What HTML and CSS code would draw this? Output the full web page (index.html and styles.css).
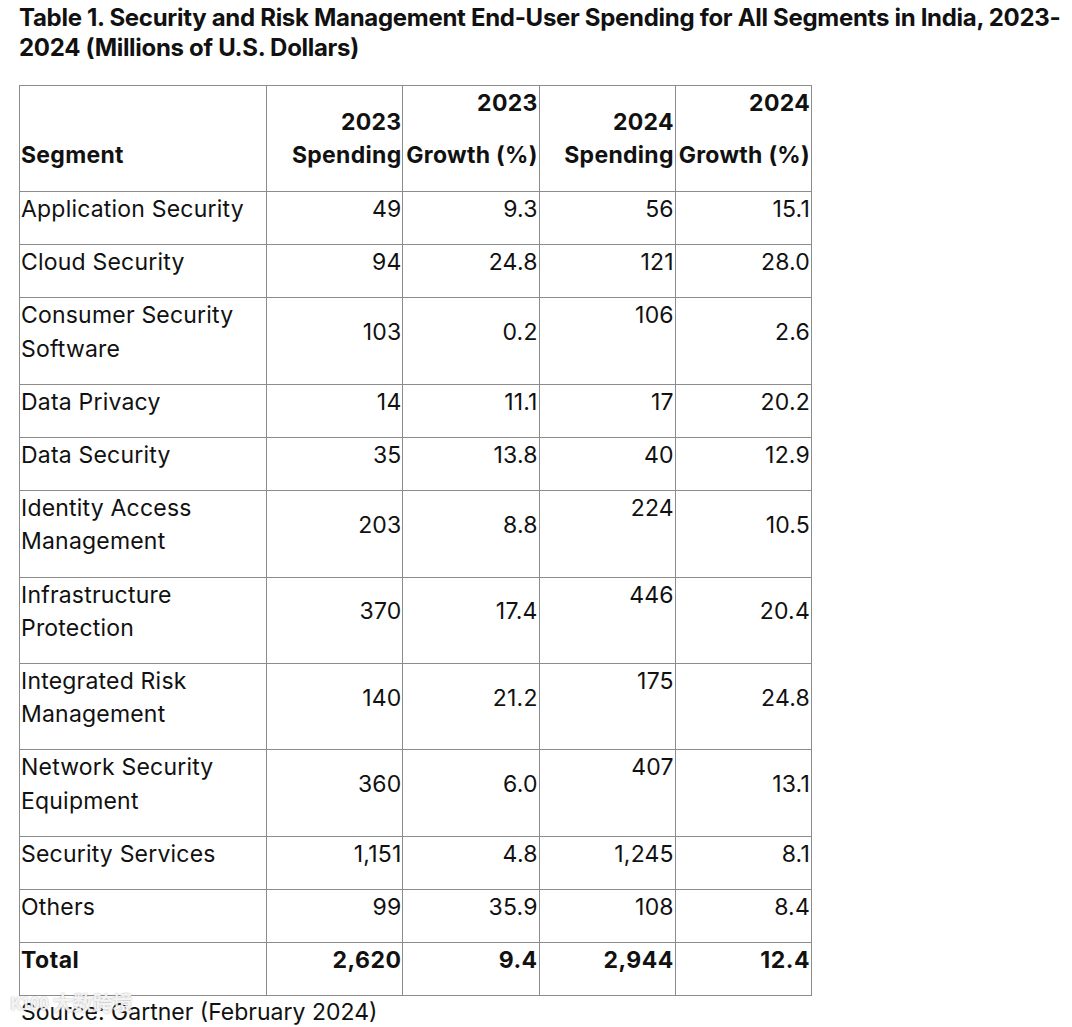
FILE: index.html
```html
<!DOCTYPE html>
<html lang="en">
<head>
<meta charset="utf-8">
<title>Table 1</title>
<link rel="stylesheet" href="styles.css">
</head>
<body>
<div class="page">
  <h3 class="title">Table 1. Security and Risk Management End-User Spending for All Segments in India, 2023-2024 (Millions of U.S. Dollars)</h3>
  <table class="data">
    <colgroup>
      <col class="c-seg"><col class="c-num"><col class="c-num"><col class="c-num"><col class="c-num">
    </colgroup>
    <thead>
      <tr>
        <th class="left"><p>Segment</p></th>
        <th><p>2023<br>Spending</p></th>
        <th><p>2023</p><p>Growth (%)</p></th>
        <th><p>2024<br>Spending</p></th>
        <th><p>2024</p><p>Growth (%)</p></th>
      </tr>
    </thead>
    <tbody>
      <tr><td class="left">Application Security</td><td>49</td><td>9.3</td><td class="top">56</td><td>15.1</td></tr>
      <tr><td class="left">Cloud Security</td><td>94</td><td>24.8</td><td class="top">121</td><td>28.0</td></tr>
      <tr><td class="left">Consumer Security<br>Software</td><td>103</td><td>0.2</td><td class="top">106</td><td>2.6</td></tr>
      <tr><td class="left">Data Privacy</td><td>14</td><td>11.1</td><td class="top">17</td><td>20.2</td></tr>
      <tr><td class="left">Data Security</td><td>35</td><td>13.8</td><td class="top">40</td><td>12.9</td></tr>
      <tr><td class="left">Identity Access<br>Management</td><td>203</td><td>8.8</td><td class="top">224</td><td>10.5</td></tr>
      <tr><td class="left">Infrastructure<br>Protection</td><td>370</td><td>17.4</td><td class="top">446</td><td>20.4</td></tr>
      <tr><td class="left">Integrated Risk<br>Management</td><td>140</td><td>21.2</td><td class="top">175</td><td>24.8</td></tr>
      <tr><td class="left">Network Security<br>Equipment</td><td>360</td><td>6.0</td><td class="top">407</td><td>13.1</td></tr>
      <tr><td class="left">Security Services</td><td>1,151</td><td>4.8</td><td class="top">1,245</td><td>8.1</td></tr>
      <tr><td class="left">Others</td><td>99</td><td>35.9</td><td class="top">108</td><td>8.4</td></tr>
      <tr class="total"><td class="left">Total</td><td>2,620</td><td>9.4</td><td class="top">2,944</td><td>12.4</td></tr>
    </tbody>
  </table>
  <p class="source">Source: Gartner (February 2024)</p>
  <div class="watermark"><span class="wm-logo">K100</span><span class="wm-text">大数跨境</span></div>
</div>
</body>
</html>
```

FILE: styles.css
```css
html, body {
  margin: 0;
  padding: 0;
  background: #ffffff;
}

.page {
  position: relative;
  padding: 3px 0 0 19px;
  font-family: Inter, "Noto Sans", sans-serif;
  color: #111111;
}

.title {
  margin: 0 0 22px 0;
  font-size: 24px;
  line-height: 30px;
  font-weight: 700;
  color: #111111;
  letter-spacing: -0.3px;
}

.data {
  border-collapse: collapse;
  table-layout: fixed;
  width: 793px;
  font-size: 23px;
  line-height: 33.2px;
  letter-spacing: 0.2px;
}

.c-seg { width: 247px; }
.c-num { width: 136px; }

.data th,
.data td {
  border: 1px solid #8c8c8c;
  text-align: right;
}

.data th {
  padding: 1px 1px 0 1px;
  vertical-align: bottom;
  font-weight: 700;
  line-height: 33px;
  letter-spacing: 0.3px;
}

.data th p {
  margin: 0 0 19px 0;
  white-space: nowrap;
}

.data td {
  padding: 1px 1px 18px 1px;
  vertical-align: middle;
  font-weight: 400;
}

.data td.top {
  vertical-align: top;
}

.data .left {
  text-align: left;
}

.data tr.total td {
  font-weight: 700;
  letter-spacing: 0.5px;
}

.source {
  margin: 0;
  font-size: 23px;
  line-height: 33px;
  padding-left: 2px;
}

.watermark {
  position: absolute;
  left: 10px;
  top: 992px;
  display: flex;
  align-items: center;
  gap: 5px;
  color: rgba(255, 255, 255, 0.85);
  text-shadow: 0 0 2px rgba(110, 110, 110, 0.6);
  font-family: "Noto Sans CJK SC", sans-serif;
  line-height: 22px;
  pointer-events: none;
}

.wm-logo {
  font-size: 17px;
  font-weight: 700;
  letter-spacing: -1px;
}

.wm-text {
  font-size: 20px;
  font-weight: 700;
}
```
